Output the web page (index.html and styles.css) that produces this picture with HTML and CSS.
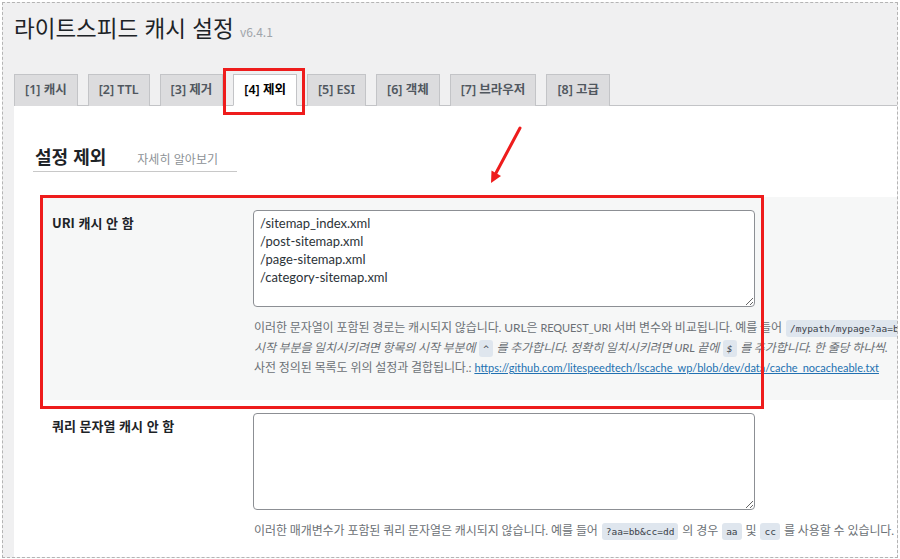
FILE: index.html
```html
<!DOCTYPE html>
<html lang="ko">
<head>
    <meta charset="UTF-8">
    <meta name="viewport" content="width=device-width, initial-scale=1.0">
    <title>라이트스피드 캐시 설정</title>
    <link rel="stylesheet" href="styles.css">
</head>
<body>

    <div class="frame">
        <div class="wrap">
            <h1>라이트스피드 캐시 설정 <span class="version">v6.4.1</span></h1>

            <nav class="tabs">
                <a class="tab">[1] 캐시</a>
                <a class="tab">[2] TTL</a>
                <a class="tab">[3] 제거</a>
                <a class="tab active">[4] 제외</a>
                <a class="tab">[5] ESI</a>
                <a class="tab">[6] 객체</a>
                <a class="tab">[7] 브라우저</a>
                <a class="tab">[8] 고급</a>
            </nav>

            <div class="panel">
                <h3 class="section-title">설정 제외 <a class="learn-more">자세히 알아보기</a></h3>

                <div class="setting-row shaded">
                    <div class="setting-label">URI 캐시 안 함</div>
                    <div class="setting-field">
                        <textarea rows="5">/sitemap_index.xml
/post-sitemap.xml
/page-sitemap.xml
/category-sitemap.xml</textarea>
                        <p class="description">
                            이러한 문자열이 포함된 경로는 캐시되지 않습니다. URL은 <span class="latin">REQUEST_URI</span> 서버 변수와 비교됩니다. 예를 들어 <code>/mypath/mypage?aa=bb</code> 의 경우 <code>mypage?aa=</code> 를 여기에 사용할 수 있습니다.<br>
                            <i>시작 부분을 일치시키려면 항목의 시작 부분에 <code>^</code> 를 추가합니다. 정확히 일치시키려면 URL 끝에 <code>$</code> 를 추가합니다. 한 줄당 하나씩.</i><br>
                            사전 정의된 목록도 위의 설정과 결합됩니다.: <a href="#">https://github.com/litespeedtech/lscache_wp/blob/dev/data/cache_nocacheable.txt</a>
                        </p>
                    </div>
                </div>

                <div class="setting-row">
                    <div class="setting-label">쿼리 문자열 캐시 안 함</div>
                    <div class="setting-field">
                        <textarea rows="5"></textarea>
                        <p class="description">
                            이러한 매개변수가 포함된 쿼리 문자열은 캐시되지 않습니다. 예를 들어 <code>?aa=bb&amp;cc=dd</code> 의 경우 <code>aa</code> 및 <code>cc</code> 를 사용할 수 있습니다. 한 줄당 하나씩.
                        </p>
                    </div>
                </div>
            </div>
        </div>

        <!-- annotations drawn over the screenshot -->
        <div class="mark mark-tab"></div>
        <div class="mark mark-row"></div>
        <svg class="arrow" width="45" height="70" viewBox="0 0 45 70">
            <line x1="35" y1="8" x2="11" y2="53" stroke="#ee1c1c" stroke-width="3" stroke-linecap="round"/>
            <polygon points="6,63 16,56 6.5,50.5" fill="#ee1c1c"/>
        </svg>
    </div>

</body>
</html>
```

FILE: styles.css
```css
body {
    margin: 0;
    background: #fff;
    font-family: "Noto Sans CJK KR", sans-serif;
    color: #1d2327;
}

.frame {
    position: relative;
    margin: 2px 0 0 2px;
    width: 894px;
    height: 554px;
    border: 1px dashed #b4b4b4;
    background: #f0f0f1;
    overflow: hidden;
}

.wrap {
    width: 1100px;
    padding-left: 11px;
}

h1 {
    margin: 9px 0 0;
    font-size: 22.5px;
    font-weight: 400;
    line-height: 30px;
    color: #1d2327;
}

.version {
    font-size: 12px;
    color: #a0a5aa;
}

.tabs {
    display: flex;
    gap: 10px;
    margin-top: 27px;
    border-bottom: 1px solid #c3c4c7;
}

.tab {
    padding: 5px 10px;
    font-family: "Noto Sans", "Noto Sans CJK KR", sans-serif;
    font-size: 12.5px;
    font-weight: 600;
    line-height: 20px;
    color: #50575e;
    background: #dcdcde;
    border: 1px solid #c3c4c7;
    border-bottom: none;
    margin-bottom: -1px;
}

.tab.active {
    background: #fff;
    color: #000;
    border-bottom: 1px solid #fff;
}

.panel {
    background: #fff;
    padding: 39px 0 0 19px;
    height: 460px;
}

.section-title {
    display: inline-block;
    margin: 0;
    padding: 0 19px 2px 2px;
    font-size: 18px;
    font-weight: 700;
    line-height: 20px;
    border-bottom: 1px solid #c8c8c8;
}

.learn-more {
    margin-left: 26px;
    font-size: 12px;
    font-weight: 400;
    color: #8c9196;
}

.setting-row {
    display: grid;
    grid-template-columns: 213px 1fr;
    margin-left: 7px;
    padding: 13px 0 22px;
}

.shaded {
    margin-top: 25px;
    background: #f6f7f7;
}

.setting-label {
    padding: 4px 0 0 12px;
    font-size: 13px;
    font-weight: 700;
    line-height: 18px;
}

textarea {
    display: block;
    width: 502px;
    height: 97px;
    box-sizing: border-box;
    padding: 3px 6px;
    font-family: "Lato", "Noto Sans CJK KR", sans-serif;
    font-size: 13px;
    line-height: 18px;
    color: #2c3338;
    border: 1px solid #8c8f94;
    border-radius: 4px;
    background: #fff;
}

.description {
    margin: 11px 0 0 1px;
    font-family: "Lato", "Noto Sans CJK KR", sans-serif;
    font-size: 12px;
    line-height: 20px;
    letter-spacing: -0.1px;
    color: #6c7176;
    white-space: nowrap;
}

.description .latin {
    font-size: 11px;
}

.description a {
    font-size: 11px;
    letter-spacing: 0;
    color: #2271b1;
}

code {
    font-family: "DejaVu Sans Mono", monospace;
    font-size: 9.5px;
    line-height: 1;
    letter-spacing: 0;
    padding: 3px 4px;
    margin: 0 1px;
    color: #3c434a;
    background: #dfe6ee;
    border-radius: 3px;
}

.mark {
    position: absolute;
    box-sizing: border-box;
    border: 3px solid #ee1c1c;
}

.mark-tab {
    left: 220px;
    top: 65px;
    width: 82px;
    height: 47px;
}

.mark-row {
    left: 37px;
    top: 192px;
    width: 724px;
    height: 214px;
}

.arrow {
    position: absolute;
    left: 482px;
    top: 117px;
}
```
